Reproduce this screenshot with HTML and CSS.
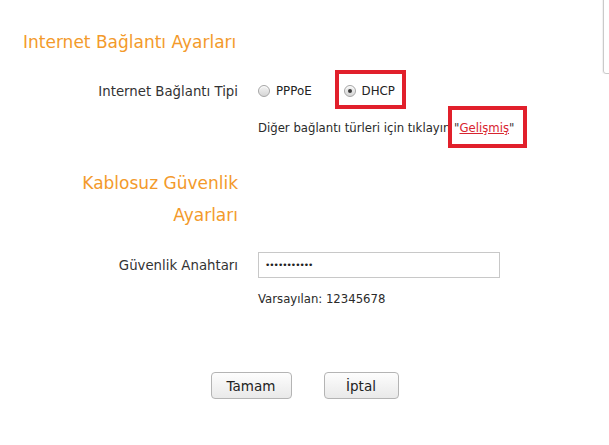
FILE: index.html
```html
<!DOCTYPE html>
<html lang="tr">
<head>
<meta charset="utf-8">
<title>Internet Bağlantı Ayarları</title>
<link rel="stylesheet" href="styles.css">
</head>
<body>
<div class="edge"></div>
<div class="page">
  <h2 class="title">Internet Bağlantı Ayarları</h2>

  <div class="row row-type">
    <div class="label">Internet Bağlantı Tipi</div>
    <div class="field radios">
      <label class="opt"><input type="radio" name="wan"><span>PPPoE</span></label>
      <label class="opt marked"><input type="radio" name="wan" checked><span>DHCP</span></label>
    </div>
  </div>

  <div class="row row-note">
    <div class="label"></div>
    <div class="field note">Diğer bağlantı türleri için tıklayın <span class="marked-link">"<a href="#">Gelişmiş</a>"</span></div>
  </div>

  <div class="row row-head2">
    <h2 class="label title2">Kablosuz Güvenlik<br>Ayarları</h2>
  </div>

  <div class="row row-key">
    <div class="label">Güvenlik Anahtarı</div>
    <div class="field"><input class="key" type="password" value="12345678901"></div>
  </div>

  <div class="row row-default">
    <div class="label"></div>
    <div class="field note">Varsayılan: 12345678</div>
  </div>

  <div class="buttons">
    <button class="btn btn-ok">Tamam</button>
    <button class="btn btn-cancel">İptal</button>
  </div>
</div>
</body>
</html>
```

FILE: styles.css
```css
html, body {
  margin: 0;
  padding: 0;
  background: #ffffff;
}
body {
  font-family: "DejaVu Sans", Verdana, sans-serif;
  color: #333333;
  width: 609px;
  height: 445px;
  overflow: hidden;
  position: relative;
}
.edge {
  position: absolute;
  left: 603px;
  top: -4px;
  width: 20px;
  height: 76px;
  border: 1px solid #cacaca;
  border-radius: 0 0 0 3px;
  box-shadow: -1px 0 1px rgba(0,0,0,0.06);
}
.page {
  padding-top: 30px;
}
.title {
  margin: 0 0 0 23px;
  font-size: 17px;
  line-height: 24px;
  font-weight: normal;
  color: #f39a2b;
}
.row {
  display: grid;
  grid-template-columns: 238px 1fr;
  column-gap: 20px;
  align-items: center;
}
.label {
  text-align: right;
  font-size: 13.3px;
  color: #333333;
}
.row-type {
  margin-top: 22px;
  height: 30px;
}
.radios {
  display: flex;
  align-items: center;
  gap: 32px;
}
.opt {
  display: flex;
  align-items: center;
  gap: 6px;
  font-size: 11.8px;
  color: #222222;
  position: relative;
}
.opt input {
  appearance: none;
  -webkit-appearance: none;
  margin: 0;
  width: 12px;
  height: 12px;
  border-radius: 50%;
  border: 1px solid #a6a6a6;
  background: linear-gradient(#f4f4f4, #d6d6d6);
  box-shadow: inset 0 1px 1px rgba(255,255,255,0.9);
  position: relative;
}
.opt input:checked::after {
  content: "";
  position: absolute;
  left: 3px;
  top: 3px;
  width: 4px;
  height: 4px;
  border-radius: 50%;
  background: #3c3c3c;
}
.marked::after {
  content: "";
  position: absolute;
  left: -9px;
  top: -14px;
  width: 63px;
  height: 31px;
  border: 4px solid #e1202b;
}
.row-note {
  margin-top: 7px;
  height: 30px;
}
.note {
  font-size: 11.7px;
  color: #2a2a2a;
}
.marked-link {
  position: relative;
  color: #333333;
}
.marked-link a {
  color: #d8232f;
  text-decoration: underline;
}
.marked-link::after {
  content: "";
  position: absolute;
  left: -6px;
  top: -15px;
  width: 71px;
  height: 34px;
  border: 4px solid #e1202b;
}
.row-head2 {
  margin-top: 24px;
}
.title2 {
  margin: 0;
  font-size: 17px;
  line-height: 32px;
  font-weight: normal;
  color: #f39a2b;
}
.row-key {
  margin-top: 21px;
}
.key {
  box-sizing: border-box;
  width: 242px;
  height: 26px;
  margin: 0;
  border: 1px solid #c8c8c8;
  padding: 0 6px;
  font-family: "DejaVu Sans", sans-serif;
  font-size: 9px;
  color: #222222;
  letter-spacing: -1px;
  outline: none;
}
.row-default {
  margin-top: 11px;
  height: 20px;
}
.buttons {
  margin-top: 63px;
  display: flex;
  justify-content: center;
  gap: 32px;
}
.btn {
  height: 27px;
  margin: 0;
  border: 1px solid #b4b4b4;
  border-radius: 4px;
  background: linear-gradient(#fdfdfd, #e9e9e9);
  font-family: "DejaVu Sans", sans-serif;
  font-size: 13.5px;
  color: #222222;
  padding: 0;
}
.btn-ok {
  width: 81px;
}
.btn-cancel {
  width: 75px;
}
```
